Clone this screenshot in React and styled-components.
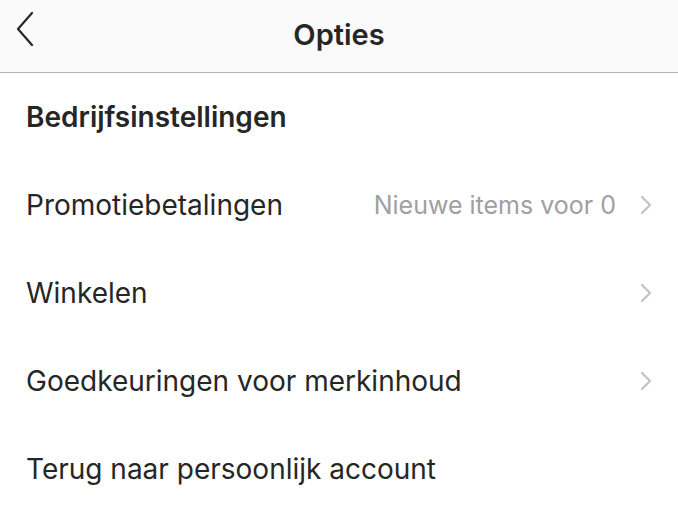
import React from "react";
import styled, { createGlobalStyle } from "styled-components";

const Global = createGlobalStyle`
  html, body { margin: 0; padding: 0; background: #ffffff; }
  body { font-family: Inter, "Noto Sans", "Liberation Sans", sans-serif; color: #262626; }
`;

const Screen = styled.div`
  width: 678px;
  height: 508px;
  overflow: hidden;
  background: #ffffff;
`;

const Header = styled.header`
  height: 72px;
  background: #fafafa;
  border-bottom: 1px solid #b4b4b4;
  display: grid;
  grid-template-columns: 60px 1fr 60px;
  align-items: center;
`;

const BackButton = styled.button`
  border: 0;
  background: none;
  padding: 12px 0 0 16px;
  height: 72px;
  display: flex;
  align-items: flex-start;
  cursor: pointer;
`;

const Title = styled.h1`
  margin: 0 0 3px;
  text-align: center;
  font-size: 29px;
  font-weight: 600;
  color: #262626;
  letter-spacing: 0;
`;

const List = styled.div`
  display: flex;
  flex-direction: column;
`;

const Row = styled.div`
  height: 88px;
  padding: 0 24px 0 26px;
  display: flex;
  align-items: center;
  gap: 22px;
`;

const Label = styled.span`
  flex: 1;
  font-size: 28px;
  font-weight: ${(p) => (p.$bold ? 600 : 400)};
  color: #262626;
  white-space: nowrap;
`;

const Detail = styled.span`
  font-size: 25px;
  color: #a0a0a0;
  white-space: nowrap;
`;

const Chevron = () => (
  <svg width="16" height="20" viewBox="0 0 16 20" fill="none">
    <path d="M4 2 L12 10 L4 18" stroke="#c4c4c4" strokeWidth="2.4" strokeLinecap="round" strokeLinejoin="round" />
  </svg>
);

const BackIcon = () => (
  <svg width="18" height="34" viewBox="0 0 18 34" fill="none">
    <path d="M16 1 L2 17 L16 33" stroke="#262626" strokeWidth="2.2" strokeLinecap="round" strokeLinejoin="round" />
  </svg>
);

const rows = [
  { label: "Bedrijfsinstellingen", bold: true },
  { label: "Promotiebetalingen", detail: "Nieuwe items voor 0", chevron: true },
  { label: "Winkelen", chevron: true },
  { label: "Goedkeuringen voor merkinhoud", chevron: true },
  { label: "Terug naar persoonlijk account" },
];

export default function App() {
  return (
    <Screen>
      <Global />
      <Header>
        <BackButton aria-label="Terug">
          <BackIcon />
        </BackButton>
        <Title>Opties</Title>
        <span />
      </Header>
      <List>
        {rows.map((r) => (
          <Row key={r.label}>
            <Label $bold={r.bold}>{r.label}</Label>
            {r.detail && <Detail>{r.detail}</Detail>}
            {r.chevron && <Chevron />}
          </Row>
        ))}
      </List>
    </Screen>
  );
}
